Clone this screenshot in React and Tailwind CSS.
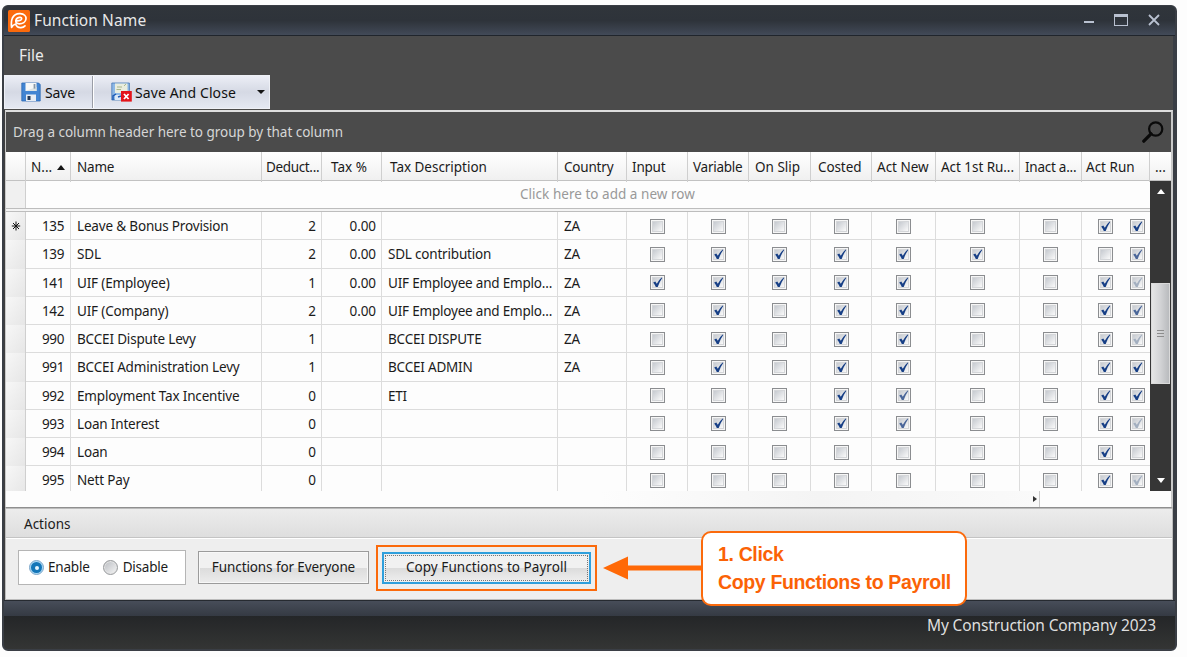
import React from 'react';

const COLS = 'grid grid-cols-[20px_45px_191px_60px_60px_176px_69px_61px_61px_62px_61px_64px_84px_62px_68px]';

const headers = [
  { label: 'Name', cls: 'pl-[6px] tracking-[-0.2px]' },
  { label: 'Deduct...', cls: 'pl-[4px] tracking-[-0.35px]' },
  { label: 'Tax %', cls: 'pl-[9px] tracking-[0px]' },
  { label: 'Tax Description', cls: 'pl-[8px] tracking-[-0.03px]' },
  { label: 'Country', cls: 'pl-[6px] tracking-[-0.2px]' },
  { label: 'Input', cls: 'pl-[5px] tracking-[-0.2px]' },
  { label: 'Variable', cls: 'pl-[5px] tracking-[-0.25px]' },
  { label: 'On Slip', cls: 'pl-[6px] tracking-[0px]' },
  { label: 'Costed', cls: 'pl-[7px] tracking-[-0.1px]' },
  { label: 'Act New', cls: 'pl-[5px] tracking-[0px]' },
  { label: 'Act 1st Ru...', cls: 'pl-[5px] tracking-[-0.05px]' },
  { label: 'Inact a...', cls: 'pl-[5px] tracking-[-0.25px]' },
  { label: 'Act Run', cls: 'pl-[4px] tracking-[0px]' }
];

// checks: 0 = empty, 1 = checked, 2 = dimmed, 3 = disabled
const rows = [
  { no: 135, name: 'Leave & Bonus Provision', ded: 2, tax: '0.00', desc: '', country: 'ZA', checks: [0, 0, 0, 0, 0, 0, 0, 1, 1] },
  { no: 139, name: 'SDL', ded: 2, tax: '0.00', desc: 'SDL contribution', country: 'ZA', checks: [0, 1, 1, 1, 1, 1, 0, 0, 2] },
  { no: 141, name: 'UIF (Employee)', ded: 1, tax: '0.00', desc: 'UIF Employee and Emplo...', country: 'ZA', checks: [1, 1, 1, 1, 1, 0, 0, 1, 3] },
  { no: 142, name: 'UIF (Company)', ded: 2, tax: '0.00', desc: 'UIF Employee and Emplo...', country: 'ZA', checks: [0, 1, 0, 1, 1, 0, 0, 1, 2] },
  { no: 990, name: 'BCCEI Dispute Levy', ded: 1, tax: '', desc: 'BCCEI DISPUTE', country: 'ZA', checks: [0, 1, 0, 1, 1, 0, 0, 1, 3] },
  { no: 991, name: 'BCCEI Administration Levy', ded: 1, tax: '', desc: 'BCCEI ADMIN', country: 'ZA', checks: [0, 1, 0, 1, 1, 0, 0, 1, 1] },
  { no: 992, name: 'Employment Tax Incentive', ded: 0, tax: '', desc: 'ETI', country: '', checks: [0, 0, 0, 1, 2, 0, 0, 1, 1] },
  { no: 993, name: 'Loan Interest', ded: 0, tax: '', desc: '', country: '', checks: [0, 1, 0, 1, 2, 0, 0, 1, 3] },
  { no: 994, name: 'Loan', ded: 0, tax: '', desc: '', country: '', checks: [0, 0, 0, 0, 0, 0, 0, 1, 0] },
  { no: 995, name: 'Nett Pay', ded: 0, tax: '', desc: '', country: '', checks: [0, 0, 0, 0, 0, 0, 0, 1, 3] }
];

const tickColors = { 1: '#173f86', 2: '#4a6699', 3: '#a3afc0' };

function CheckBox({ state }) {
  return (
    <span className="block size-[15px] shrink-0 border border-[#8b8d90] bg-[#f6f6f6] p-px">
      <span className="block size-[11px] border border-[#d4d6d9] bg-linear-to-br from-[#c6cad0] to-[#fafafa]">
        {state > 0 && (
          <svg viewBox="0 0 11 11" className="-ml-px -mt-px size-[11px] overflow-visible">
            <path d="M1.2 5.4 L3.3 4.4 L4.8 6.8 Q6.6 3 9.6 .4 L10.2 .9 Q7.4 4.8 5.7 10 L3.8 10 Q2.8 7.4 1.2 5.4Z" fill={tickColors[state]} />
          </svg>
        )}
      </span>
    </span>
  );
}

function Logo() {
  return (
    <svg viewBox="0 0 22 22" className="size-[22px]">
      <rect width="22" height="22" rx="1.5" fill="#fb6a0c" />
      <path
        d="M3.6 17.4 C3.2 14 3 11 4.4 8 C6 4.8 9 3.4 12.2 3.6 C16 3.8 18.4 6 18 9 C17.6 12 14.6 13.8 11.4 13.8 C9 13.8 7.4 12.6 7.8 10.6 C8.2 8.4 10.4 7 12.4 7.4 C14.2 7.8 14 9.6 12.4 10.2 C10.8 10.8 9 10.8 7.8 11 M3.6 17.4 C4.4 15.8 5.6 14.6 7.6 14 C8.4 16.4 10.4 17.8 13 17.6 C14.8 17.4 16 16.8 17 15.8"
        fill="none"
        stroke="#fff"
        strokeWidth="1.7"
        strokeLinecap="round"
        strokeLinejoin="round"
      />
    </svg>
  );
}

function SaveIcon() {
  return (
    <svg viewBox="0 0 20 20" className="size-5">
      <path d="M.8 1 H17.6 L19.2 2.6 V19 H.8Z" fill="#4184d2" stroke="#2d69b4" strokeWidth=".8" />
      <path d="M4.5 1 H15.5 V9 H4.5Z" fill="#f6f8f8" />
      <path d="M4.5 9 L15.5 5 V9Z" fill="#dde4e4" />
      <rect x="12.6" y="2" width="1.8" height="4.6" fill="#8796a5" />
      <rect x="5" y="12.5" width="10" height="6.5" fill="#e7edf5" />
      <rect x="6.5" y="14" width="3" height="4" fill="#263a57" />
    </svg>
  );
}

function SaveCloseIcon() {
  return (
    <svg viewBox="0 0 21 20" className="h-5 w-[21px]">
      <path d="M.8 1 H18.4 V18 H.8Z" fill="#8db8e6" stroke="#4778b5" strokeWidth=".8" />
      <path d="M4 1.5 H16.5 V11 H4Z" fill="#e9edde" />
      <path d="M6 5 H11 M5.5 7.5 H10 M13 4 L15 2" stroke="#a9b68c" strokeWidth="1" />
      <path d="M4 13 H10 V18 H4Z" fill="#dbe8f7" />
      <path d="M2 18 V14 L5 12 M7 15 L10 14" stroke="#1e5bb5" strokeWidth="1.5" fill="none" />
      <rect x="10" y="9" width="10.8" height="10.6" fill="#e3151b" />
      <path d="M13 12 L17.6 17 M17.6 12 L13 17" stroke="#fff" strokeWidth="1.8" />
    </svg>
  );
}

function TitleBar() {
  return (
    <div className="flex h-[30px] items-center border-b border-[#20252c] bg-linear-to-b from-[#30353b] via-[#2e333a] to-[#424a58] pl-[4px] pr-[15px]">
      <Logo />
      <span className="ml-[4px] text-[15.5px] tracking-[0.1px] text-[#e8e8e8]">Function Name</span>
      <div className="ml-auto flex items-center text-[#b9c1d0]">
        <span className="mt-[3px] h-[2px] w-[10px] bg-[#b9c1d0]" />
        <span className="-mt-[2px] ml-[20px] h-[12px] w-[14px] border border-t-[3px] border-[#b9c1d0]" />
        <svg viewBox="0 0 12 12" className="-mt-[2px] ml-[20px] size-[12px]">
          <path d="M1 1 L11 11 M11 1 L1 11" stroke="currentColor" strokeWidth="1.8" />
        </svg>
      </div>
    </div>
  );
}

function Toolbar() {
  return (
    <div className="h-[74px] bg-[#4b4b4b]">
      <div className="flex h-[39px] items-center pl-[15px] pt-px text-[15.5px] text-[#ececec]">File</div>
      <div className="flex h-[34px] w-[266px] border border-[#eef0f6] bg-linear-to-b from-[#eceef6] via-[#d5d9e4] to-[#e4e8f2] text-[14px] text-[#111]">
        <div className="flex w-[88px] items-center border-r border-[#9a9da6] pl-[16px]">
          <SaveIcon />
          <span className="ml-[4px] tracking-[-0.1px]">Save</span>
        </div>
        <div className="flex flex-1 items-center border-l border-white pl-[17px]">
          <SaveCloseIcon />
          <span className="ml-[3px] whitespace-nowrap tracking-[0.1px]">Save And Close</span>
          <span className="ml-auto mr-[4px] border-x-[4px] border-t-[4px] border-x-transparent border-t-[#151515]" />
        </div>
      </div>
    </div>
  );
}

function GridHeader() {
  return (
    <div className="flex h-[29px] border-b border-[#c2c2c2] bg-linear-to-b from-white to-[#f0f0f0]">
      <div className={`${COLS} h-[28px] items-stretch leading-[30px]`}>
        <div className="border-r border-[#cfcfcf]" />
        <div className="flex items-center border-r border-[#cfcfcf] pl-[5px]">
          N...
          <span className="ml-[5px] border-x-[4px] border-b-[5px] border-x-transparent border-b-[#151515]" />
        </div>
        {headers.map((h) => (
          <div key={h.label} className={`overflow-hidden whitespace-nowrap border-r border-[#cfcfcf] ${h.cls}`}>
            {h.label}
          </div>
        ))}
      </div>
      <div className="w-[21px] pl-[5px] leading-[30px]">...</div>
    </div>
  );
}

function Row({ row, first }) {
  const cell = 'border-r border-[#dcdcdc]';
  return (
    <div className={`${COLS} h-[28.25px] border-b border-[#dcdcdc] leading-[28.4px]`}>
      <div className="flex items-center justify-center border-r border-[#cfcfcf] bg-linear-to-br from-[#f7f7f7] to-[#e6e6e6]">
        {first && (
          <svg viewBox="0 0 10 10" className="size-[10px]">
            <path d="M5 .5 V9.5 M.8 5 H9.2 M2 2 L8 8 M8 2 L2 8" stroke="#111" strokeWidth="1" />
          </svg>
        )}
      </div>
      <div className={`${cell} pr-[6px] text-right tracking-[-0.4px]`}>{row.no}</div>
      <div className={`${cell} whitespace-nowrap pl-[6px] tracking-[-0.17px]`}>{row.name}</div>
      <div className={`${cell} pr-[5px] text-right`}>{row.ded}</div>
      <div className={`${cell} pr-[5px] text-right tracking-[-0.1px]`}>{row.tax}</div>
      <div className={`${cell} overflow-hidden whitespace-nowrap pl-[6px] tracking-[-0.2px]`}>{row.desc}</div>
      <div className={`${cell} pl-[6px] tracking-[-0.1px]`}>{row.country}</div>
      {row.checks.slice(0, 7).map((c, i) => (
        <div key={i} className={`${cell} flex items-center justify-center`}>
          <CheckBox state={c} />
        </div>
      ))}
      <div className="flex items-center gap-[17px] pl-[16px]">
        <CheckBox state={row.checks[7]} />
        <CheckBox state={row.checks[8]} />
      </div>
    </div>
  );
}

function VerticalScroll() {
  return (
    <div className="flex w-[21px] flex-col items-center bg-[#363636]">
      <span className="mt-[8px] border-x-[4px] border-b-[5px] border-x-transparent border-b-white" />
      <div className="mt-[89px] flex h-[101px] w-[19px] flex-col items-center justify-center gap-[2px] border border-[#dadada] bg-linear-to-r from-[#e5e5e5] via-[#d2d3d5] to-[#b9bbbe]">
        <span className="h-px w-[7px] bg-[#8d8d8d]" />
        <span className="h-px w-[7px] bg-[#8d8d8d]" />
        <span className="h-px w-[7px] bg-[#8d8d8d]" />
      </div>
      <span className="mb-[8px] mt-auto border-x-[4px] border-t-[5px] border-x-transparent border-t-white" />
    </div>
  );
}

function GridPanel() {
  return (
    <div className="flex h-[398px] flex-col border-2 border-b border-l border-r-[2px] border-b-[#8f8f8f] border-l-[#c9c9c9] border-r-[#c9c9c9] border-t-[#dedede] bg-[#fdfdfd]">
      <div className="flex h-[40px] shrink-0 items-center justify-between bg-[#4b4b4b] pl-[7px] pr-[7px] text-[#d6d6d6]">
        <span className="pt-px text-[13.5px] tracking-[-0.02px]">Drag a column header here to group by that column</span>
        <svg viewBox="0 0 22 22" className="-mt-px size-[22px]">
          <circle cx="13.7" cy="8" r="6.6" fill="none" stroke="#0a0a0a" strokeWidth="2.2" />
          <path d="M9 12.8 L1.8 20.2" stroke="#0a0a0a" strokeWidth="3.2" strokeLinecap="round" />
        </svg>
      </div>
      <GridHeader />
      <div className="flex h-[310px] shrink-0">
        <div className="w-[1144px] overflow-hidden">
          <div className="flex h-[28px] border-b border-[#bdbdbd]">
            <div className="w-[20px] border-r border-[#cfcfcf] bg-[#f0f0f0]" />
            <div className="pl-[494px] leading-[27px] tracking-[0.03px] text-[#999]">Click here to add a new row</div>
          </div>
          <div className="h-[3px] border-b border-[#bdbdbd] bg-[#f4f4f4]" />
          {rows.map((row, i) => (
            <Row key={row.no} row={row} first={i === 0} />
          ))}
        </div>
        <VerticalScroll />
      </div>
      <div className="flex flex-1">
        <div className="ml-[594px] flex w-[440px] items-center justify-end border-r border-[#c9c9c9] bg-linear-to-r from-transparent via-[#f4f4f4] to-[#fafafa] pr-[2px]">
          <span className="border-y-[3px] border-l-[4px] border-y-transparent border-l-[#333]" />
        </div>
      </div>
    </div>
  );
}

function Radio({ checked }) {
  return checked ? (
    <span className="flex size-[15px] items-center justify-center rounded-full border border-[#7fa7c9] bg-[#a9d8f5]">
      <span className="flex size-[11px] items-center justify-center rounded-full bg-[#1476b8]">
        <span className="size-[4px] rounded-full bg-[#e6f6ff]" />
      </span>
    </span>
  ) : (
    <span className="size-[15px] rounded-full border border-[#97999c] bg-linear-to-br from-[#b9bcc1] to-[#f7f7f7] shadow-[inset_0_0_0_1px_#e4e4e4]" />
  );
}

function ActionsPanel() {
  const button = 'flex items-center justify-center whitespace-nowrap bg-linear-to-b from-[#f1f1f1] from-50% via-[#dcdcdc] via-52% to-[#ececec]';
  return (
    <div className="h-[92px] border border-[#bcbcbc] bg-[#eeeeee]">
      <div className="h-[29px] border-b border-[#c4c4c4] bg-linear-to-b from-[#ececec] to-[#dedede] pl-[18px] leading-[30px]">Actions</div>
      <div className="flex h-[60px] items-center border-t border-white pb-[2px] pl-[12px]">
        <div className="flex h-[35px] w-[168px] items-center border border-[#b5b5b5] bg-white pl-[10px]">
          <Radio checked />
          <span className="ml-[4px] tracking-[-0.2px]">Enable</span>
          <span className="ml-[13px] flex items-center">
            <Radio />
            <span className="ml-[5px] tracking-[-0.2px]">Disable</span>
          </span>
        </div>
        <div className={`${button} ml-[12px] h-[33px] w-[171px] border border-[#9b9b9b] tracking-[-0.1px] shadow-[inset_0_0_0_1px_#f8f8f8]`}>
          Functions for Everyone
        </div>
        <div className="ml-[7px] h-[46px] w-[221px] border-2 border-[#fb6a0c] px-[4px] py-[5px]">
          <div className="h-[32px] w-[209px] border-2 border-[#2f9fdc] p-px">
            <div className={`${button} h-full border border-dotted border-[#777] tracking-[0.05px]`}>Copy Functions to Payroll</div>
          </div>
        </div>
      </div>
    </div>
  );
}

function Callout() {
  return (
    <div className="absolute left-[603px] top-[531px] flex h-[75px] items-center">
      <svg viewBox="0 0 99 24" className="-mr-px mb-[2px] h-[24px] w-[99px]">
        <path d="M0 12 L25 .6 V9.5 H99 V14.5 H25 V23.4Z" fill="#ff6907" />
      </svg>
      <div className="h-[75px] w-[266px] whitespace-nowrap rounded-[10px] border-2 border-[#fb6a0c] bg-white pl-[15px] pt-[7px] font-['Liberation_Sans',sans-serif] text-[19.5px] font-bold leading-[28px] tracking-[-0.35px] text-[#fb6206]">
        <div>1. Click</div>
        <div>Copy Functions to Payroll</div>
      </div>
    </div>
  );
}

export default function App() {
  return (
    <div className="relative h-[657px] w-[1187px] overflow-hidden bg-[#fdfdfd] pl-[2px] pt-[5px] font-['Noto_Sans',sans-serif] text-[13.5px] text-[#1b1b1b]">
      <div className="h-[646px] w-[1175px] overflow-hidden rounded-[6px] border-2 border-t border-[#3a3e45] bg-[#3a3e45]">
        <TitleBar />
        <div className="mr-[2px]">
          <Toolbar />
          <div className="border-l border-[#3f3f3f]">
            <GridPanel />
            <ActionsPanel />
          </div>
        </div>
        <div className="h-[16px] border-t border-[#262a30] bg-linear-to-b from-[#474d59] to-[#353a43]" />
        <div className="flex h-[33px] justify-end bg-linear-to-b from-[#242628] to-[#343534] pr-[19px] text-[15.5px] leading-[19px] tracking-[-0.13px] text-[#dedede]">
          My Construction Company 2023
        </div>
      </div>
      <Callout />
    </div>
  );
}
